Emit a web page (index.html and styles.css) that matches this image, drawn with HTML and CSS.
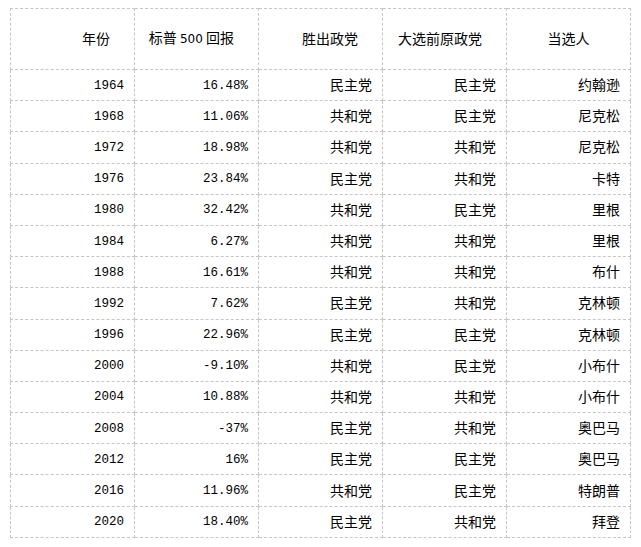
FILE: index.html
```html
<!DOCTYPE html>
<html lang="zh">
<head>
<meta charset="utf-8">
<link rel="stylesheet" href="styles.css">
</head>
<body>
<table class="data">
  <colgroup>
    <col class="c"><col class="c"><col class="c"><col class="c"><col class="c">
  </colgroup>
  <thead>
    <tr class="head">
      <th>年份</th>
      <th>标普 <span class="lat">500</span> 回报</th>
      <th>胜出政党</th>
      <th>大选前原政党</th>
      <th class="center">当选人</th>
    </tr>
  </thead>
  <tbody>
    <tr><td class="num">1964</td><td class="num">16.48%</td><td>民主党</td><td>民主党</td><td>约翰逊</td></tr>
    <tr><td class="num">1968</td><td class="num">11.06%</td><td>共和党</td><td>民主党</td><td>尼克松</td></tr>
    <tr><td class="num">1972</td><td class="num">18.98%</td><td>共和党</td><td>共和党</td><td>尼克松</td></tr>
    <tr><td class="num">1976</td><td class="num">23.84%</td><td>民主党</td><td>共和党</td><td>卡特</td></tr>
    <tr><td class="num">1980</td><td class="num">32.42%</td><td>共和党</td><td>民主党</td><td>里根</td></tr>
    <tr><td class="num">1984</td><td class="num">6.27%</td><td>共和党</td><td>共和党</td><td>里根</td></tr>
    <tr><td class="num">1988</td><td class="num">16.61%</td><td>共和党</td><td>共和党</td><td>布什</td></tr>
    <tr><td class="num">1992</td><td class="num">7.62%</td><td>民主党</td><td>共和党</td><td>克林顿</td></tr>
    <tr><td class="num">1996</td><td class="num">22.96%</td><td>民主党</td><td>民主党</td><td>克林顿</td></tr>
    <tr><td class="num">2000</td><td class="num">-9.10%</td><td>共和党</td><td>民主党</td><td>小布什</td></tr>
    <tr><td class="num">2004</td><td class="num">10.88%</td><td>共和党</td><td>共和党</td><td>小布什</td></tr>
    <tr><td class="num">2008</td><td class="num">-37%</td><td>民主党</td><td>共和党</td><td>奥巴马</td></tr>
    <tr><td class="num">2012</td><td class="num">16%</td><td>民主党</td><td>民主党</td><td>奥巴马</td></tr>
    <tr><td class="num">2016</td><td class="num">11.96%</td><td>共和党</td><td>民主党</td><td>特朗普</td></tr>
    <tr><td class="num">2020</td><td class="num">18.40%</td><td>民主党</td><td>共和党</td><td>拜登</td></tr>
  </tbody>
</table>
</body>
</html>
```
FILE: styles.css
```css
html, body {
  margin: 0;
  padding: 0;
  background: #ffffff;
}
body {
  padding: 8px 0 0 10px;
  font-family: "Noto Sans CJK SC", "Noto Sans", sans-serif;
  font-size: 14px;
  color: #000000;
}
.data {
  border-collapse: collapse;
  table-layout: fixed;
  width: 621px;
}
.data .c {
  width: 124px;
}
.data th,
.data td {
  border: 1px dashed #c6c6c6;
  padding: 0 10px 2px 0;
  text-align: right;
  vertical-align: middle;
  line-height: 16px;
  font-weight: normal;
}
.data .head {
  height: 61px;
}
.data .head th {
  padding-right: 24px;
  padding-bottom: 3px;
}
.data .head th.center {
  text-align: center;
  padding: 0 0 3px 0;
}
.data tbody tr {
  height: 31.2px;
}
.data td.num {
  font-family: "Liberation Mono", monospace;
  font-size: 12.5px;
  padding-bottom: 0;
  padding-top: 1px;
}
.lat {
  font-family: "DejaVu Sans", sans-serif;
  font-size: 12px;
}
```
